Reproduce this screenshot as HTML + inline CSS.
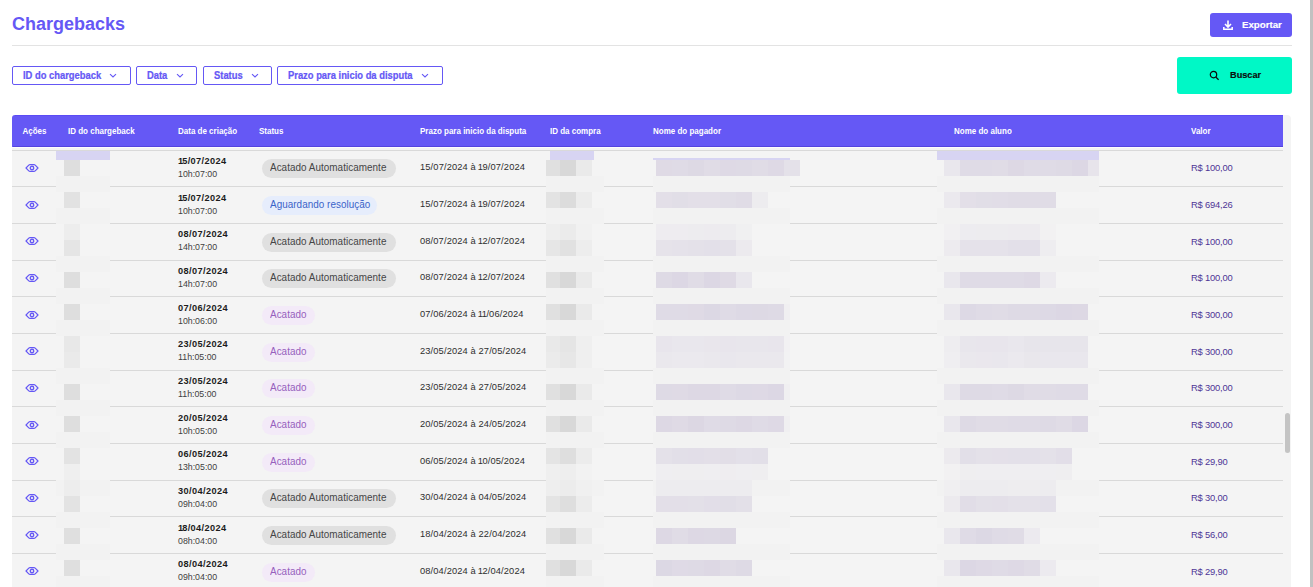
<!DOCTYPE html><html><head><meta charset="utf-8"><style>
*{margin:0;padding:0;box-sizing:border-box}
html,body{width:1313px;height:587px;overflow:hidden;background:#fff;font-family:"Liberation Sans",sans-serif}
.a{position:absolute;white-space:nowrap}
.t{position:absolute;white-space:nowrap;line-height:1}
.fb{position:absolute;top:66px;height:19px;border:1px solid #6558f5;border-radius:2px;background:#fff}
.fb span{position:absolute;top:4px;left:10px;font-size:9.4px;font-weight:700;color:#6558f5;line-height:1;transform:scaleY(1.1);transform-origin:0 100%;-webkit-text-stroke:0.2px #6558f5}
.chev{position:absolute;top:6px;width:8px;height:5px}
.hd{position:absolute;top:128px;font-size:8px;font-weight:700;color:#fff;line-height:1;transform:scaleY(1.2);transform-origin:0 100%}
.line{position:absolute;left:12px;width:1271px;height:1px;background:#d9d9d9}
.eye{position:absolute}
.dt{position:absolute;left:178px;font-size:9.2px;font-weight:700;color:#1c1c1c;line-height:1;letter-spacing:0.4px}
.o1{margin-left:-0.9px;margin-right:-0.7px}
.o1f{margin-right:-1.4px}
.o2{margin-left:-0.8px;margin-right:-0.6px}
.tm{position:absolute;left:178px;font-size:8.8px;color:#3f3f3f;line-height:1}
.pill{position:absolute;left:262px;height:19px;border-radius:10px}
.pill span{position:absolute;left:8px;top:3.9px;font-size:9.9px;line-height:1;letter-spacing:0.05px;transform:scaleY(1.04);transform-origin:0 100%}
.pz{position:absolute;left:420px;font-size:9.3px;color:#2e2e2e;line-height:1;letter-spacing:0.13px}
.vl{position:absolute;left:1191px;font-size:9.4px;color:#4e3596;line-height:1;letter-spacing:-0.2px}
.bl{position:absolute}
</style></head><body><div class="t" style="left:12px;top:15px;font-size:18px;font-weight:700;color:#6558f5">Chargebacks</div>
<div class="a" style="left:12px;top:45px;width:1280px;height:1px;background:#e3e3e3"></div>
<div class="a" style="left:1210px;top:13px;width:82px;height:24px;background:#6558f5;border-radius:3px"></div>
<svg class="a" style="left:1222px;top:20px" width="12" height="11" viewBox="0 0 12 11"><path d="M6 0.5V6.5M3 4L6 7L9 4" stroke="#fff" stroke-width="1.6" fill="none"/><path d="M1.8 7V9.2H10.2V7" stroke="#fff" stroke-width="1.5" fill="none"/></svg>
<div class="t" style="left:1242px;top:20px;font-size:9.7px;font-weight:700;color:#fff;transform:scaleY(1);transform-origin:0 100%;-webkit-text-stroke:0.15px #fff">Exportar</div>
<div class="fb" style="left:12px;width:119px"><span>ID do chargeback</span><svg class="chev" style="left:96px" viewBox="0 0 8 5"><path d="M1 1.2L4 4L7 1.2" stroke="#6558f5" stroke-width="1.1" fill="none"/></svg></div>
<div class="fb" style="left:136px;width:61px"><span>Data</span><svg class="chev" style="left:39px" viewBox="0 0 8 5"><path d="M1 1.2L4 4L7 1.2" stroke="#6558f5" stroke-width="1.1" fill="none"/></svg></div>
<div class="fb" style="left:203px;width:69px"><span>Status</span><svg class="chev" style="left:47px" viewBox="0 0 8 5"><path d="M1 1.2L4 4L7 1.2" stroke="#6558f5" stroke-width="1.1" fill="none"/></svg></div>
<div class="fb" style="left:277px;width:166px"><span>Prazo para inicio da disputa</span><svg class="chev" style="left:143px" viewBox="0 0 8 5"><path d="M1 1.2L4 4L7 1.2" stroke="#6558f5" stroke-width="1.1" fill="none"/></svg></div>
<div class="a" style="left:1177px;top:57px;width:115px;height:37px;background:#00f8c6;border-radius:3px"></div>
<svg class="a" style="left:1209px;top:70px" width="11" height="11" viewBox="0 0 11 11"><circle cx="4.5" cy="4.6" r="3.2" stroke="#0a0a0a" stroke-width="1.2" fill="none"/><path d="M6.9 7.1L9.6 9.8" stroke="#0a0a0a" stroke-width="1.3"/></svg>
<div class="t" style="left:1230px;top:70.5px;font-size:9.2px;font-weight:700;color:#0c0c0c;transform:scaleY(1.08);transform-origin:0 100%;-webkit-text-stroke:0.15px #0c0c0c">Buscar</div>
<div class="a" style="left:12px;top:115px;width:1279px;height:480px;background:#f4f4f4;border-radius:4px 4px 0 0"></div>
<div class="a" style="left:12px;top:115px;width:1271px;height:32px;background:#6558f5;border-radius:3px 0 0 0"></div>
<div class="a" style="left:12px;top:147px;width:1271px;height:1px;background:#fdfdfd"></div>
<div class="a" style="left:13px;top:146px;width:1270px;height:1px;background:#5444de"></div>
<div class="a" style="left:15px;top:115px;width:1268px;height:1px;background:#5b4bf5"></div>
<div class="hd" style="left:22.5px">Ações</div>
<div class="hd" style="left:68px">ID do chargeback</div>
<div class="hd" style="left:178px">Data de criação</div>
<div class="hd" style="left:259px">Status</div>
<div class="hd" style="left:420px">Prazo para inicio da disputa</div>
<div class="hd" style="left:550px">ID da compra</div>
<div class="hd" style="left:653px">Nome do pagador</div>
<div class="hd" style="left:954px">Nome do aluno</div>
<div class="hd" style="left:1191px">Valor</div>
<div class="line" style="top:150px"></div>
<svg class="eye" style="top:163px;left:25px" width="14" height="10" viewBox="0 0 14 10"><path d="M1 5L3.8 2.1Q4.3 1.6 5 1.6H9Q9.7 1.6 10.2 2.1L13 5L10.2 7.9Q9.7 8.4 9 8.4H5Q4.3 8.4 3.8 7.9Z" stroke="#6558f5" stroke-width="1.2" fill="none" stroke-linejoin="round"/><circle cx="7" cy="5" r="1.75" stroke="#6558f5" stroke-width="1.3" fill="none"/></svg>
<div class="dt" style="top:157px"><span class="o1f">1</span>5/07/2024</div>
<div class="tm" style="top:170px">10h:07:00</div>
<div class="pill" style="top:159px;width:134px;background:#e0e0e0"><span style="color:#454545">Acatado Automaticamente</span></div>
<div class="pz" style="top:163px"><span class="o2f">1</span>5/07/2024 à <span class="o2">1</span>9/07/2024</div>
<div class="vl" style="top:163px">R$ 100,00</div>
<div class="line" style="top:186px"></div>
<svg class="eye" style="top:200px;left:25px" width="14" height="10" viewBox="0 0 14 10"><path d="M1 5L3.8 2.1Q4.3 1.6 5 1.6H9Q9.7 1.6 10.2 2.1L13 5L10.2 7.9Q9.7 8.4 9 8.4H5Q4.3 8.4 3.8 7.9Z" stroke="#6558f5" stroke-width="1.2" fill="none" stroke-linejoin="round"/><circle cx="7" cy="5" r="1.75" stroke="#6558f5" stroke-width="1.3" fill="none"/></svg>
<div class="dt" style="top:194px"><span class="o1f">1</span>5/07/2024</div>
<div class="tm" style="top:207px">10h:07:00</div>
<div class="pill" style="top:196px;width:115px;background:#e6edfc"><span style="color:#3a63c9">Aguardando resolução</span></div>
<div class="pz" style="top:200px"><span class="o2f">1</span>5/07/2024 à <span class="o2">1</span>9/07/2024</div>
<div class="vl" style="top:200px">R$ 694,26</div>
<div class="line" style="top:223px"></div>
<svg class="eye" style="top:236px;left:25px" width="14" height="10" viewBox="0 0 14 10"><path d="M1 5L3.8 2.1Q4.3 1.6 5 1.6H9Q9.7 1.6 10.2 2.1L13 5L10.2 7.9Q9.7 8.4 9 8.4H5Q4.3 8.4 3.8 7.9Z" stroke="#6558f5" stroke-width="1.2" fill="none" stroke-linejoin="round"/><circle cx="7" cy="5" r="1.75" stroke="#6558f5" stroke-width="1.3" fill="none"/></svg>
<div class="dt" style="top:230px">08/07/2024</div>
<div class="tm" style="top:243px">14h:07:00</div>
<div class="pill" style="top:233px;width:134px;background:#e0e0e0"><span style="color:#454545">Acatado Automaticamente</span></div>
<div class="pz" style="top:237px">08/07/2024 à <span class="o2">1</span>2/07/2024</div>
<div class="vl" style="top:237px">R$ 100,00</div>
<div class="line" style="top:260px"></div>
<svg class="eye" style="top:273px;left:25px" width="14" height="10" viewBox="0 0 14 10"><path d="M1 5L3.8 2.1Q4.3 1.6 5 1.6H9Q9.7 1.6 10.2 2.1L13 5L10.2 7.9Q9.7 8.4 9 8.4H5Q4.3 8.4 3.8 7.9Z" stroke="#6558f5" stroke-width="1.2" fill="none" stroke-linejoin="round"/><circle cx="7" cy="5" r="1.75" stroke="#6558f5" stroke-width="1.3" fill="none"/></svg>
<div class="dt" style="top:267px">08/07/2024</div>
<div class="tm" style="top:280px">14h:07:00</div>
<div class="pill" style="top:269px;width:134px;background:#e0e0e0"><span style="color:#454545">Acatado Automaticamente</span></div>
<div class="pz" style="top:273px">08/07/2024 à <span class="o2">1</span>2/07/2024</div>
<div class="vl" style="top:273px">R$ 100,00</div>
<div class="line" style="top:296px"></div>
<svg class="eye" style="top:310px;left:25px" width="14" height="10" viewBox="0 0 14 10"><path d="M1 5L3.8 2.1Q4.3 1.6 5 1.6H9Q9.7 1.6 10.2 2.1L13 5L10.2 7.9Q9.7 8.4 9 8.4H5Q4.3 8.4 3.8 7.9Z" stroke="#6558f5" stroke-width="1.2" fill="none" stroke-linejoin="round"/><circle cx="7" cy="5" r="1.75" stroke="#6558f5" stroke-width="1.3" fill="none"/></svg>
<div class="dt" style="top:304px">07/06/2024</div>
<div class="tm" style="top:317px">10h:06:00</div>
<div class="pill" style="top:306px;width:53px;background:#f3eaf8"><span style="color:#9660bd">Acatado</span></div>
<div class="pz" style="top:310px">07/06/2024 à <span class="o2">1</span><span class="o2">1</span>/06/2024</div>
<div class="vl" style="top:310px">R$ 300,00</div>
<div class="line" style="top:333px"></div>
<svg class="eye" style="top:346px;left:25px" width="14" height="10" viewBox="0 0 14 10"><path d="M1 5L3.8 2.1Q4.3 1.6 5 1.6H9Q9.7 1.6 10.2 2.1L13 5L10.2 7.9Q9.7 8.4 9 8.4H5Q4.3 8.4 3.8 7.9Z" stroke="#6558f5" stroke-width="1.2" fill="none" stroke-linejoin="round"/><circle cx="7" cy="5" r="1.75" stroke="#6558f5" stroke-width="1.3" fill="none"/></svg>
<div class="dt" style="top:340px">23/05/2024</div>
<div class="tm" style="top:353px">11h:05:00</div>
<div class="pill" style="top:343px;width:53px;background:#f3eaf8"><span style="color:#9660bd">Acatado</span></div>
<div class="pz" style="top:347px">23/05/2024 à 27/05/2024</div>
<div class="vl" style="top:347px">R$ 300,00</div>
<div class="line" style="top:370px"></div>
<svg class="eye" style="top:383px;left:25px" width="14" height="10" viewBox="0 0 14 10"><path d="M1 5L3.8 2.1Q4.3 1.6 5 1.6H9Q9.7 1.6 10.2 2.1L13 5L10.2 7.9Q9.7 8.4 9 8.4H5Q4.3 8.4 3.8 7.9Z" stroke="#6558f5" stroke-width="1.2" fill="none" stroke-linejoin="round"/><circle cx="7" cy="5" r="1.75" stroke="#6558f5" stroke-width="1.3" fill="none"/></svg>
<div class="dt" style="top:377px">23/05/2024</div>
<div class="tm" style="top:390px">11h:05:00</div>
<div class="pill" style="top:379px;width:53px;background:#f3eaf8"><span style="color:#9660bd">Acatado</span></div>
<div class="pz" style="top:383px">23/05/2024 à 27/05/2024</div>
<div class="vl" style="top:383px">R$ 300,00</div>
<div class="line" style="top:406px"></div>
<svg class="eye" style="top:420px;left:25px" width="14" height="10" viewBox="0 0 14 10"><path d="M1 5L3.8 2.1Q4.3 1.6 5 1.6H9Q9.7 1.6 10.2 2.1L13 5L10.2 7.9Q9.7 8.4 9 8.4H5Q4.3 8.4 3.8 7.9Z" stroke="#6558f5" stroke-width="1.2" fill="none" stroke-linejoin="round"/><circle cx="7" cy="5" r="1.75" stroke="#6558f5" stroke-width="1.3" fill="none"/></svg>
<div class="dt" style="top:414px">20/05/2024</div>
<div class="tm" style="top:427px">10h:05:00</div>
<div class="pill" style="top:416px;width:53px;background:#f3eaf8"><span style="color:#9660bd">Acatado</span></div>
<div class="pz" style="top:420px">20/05/2024 à 24/05/2024</div>
<div class="vl" style="top:420px">R$ 300,00</div>
<div class="line" style="top:443px"></div>
<svg class="eye" style="top:456px;left:25px" width="14" height="10" viewBox="0 0 14 10"><path d="M1 5L3.8 2.1Q4.3 1.6 5 1.6H9Q9.7 1.6 10.2 2.1L13 5L10.2 7.9Q9.7 8.4 9 8.4H5Q4.3 8.4 3.8 7.9Z" stroke="#6558f5" stroke-width="1.2" fill="none" stroke-linejoin="round"/><circle cx="7" cy="5" r="1.75" stroke="#6558f5" stroke-width="1.3" fill="none"/></svg>
<div class="dt" style="top:450px">06/05/2024</div>
<div class="tm" style="top:463px">13h:05:00</div>
<div class="pill" style="top:453px;width:53px;background:#f3eaf8"><span style="color:#9660bd">Acatado</span></div>
<div class="pz" style="top:457px">06/05/2024 à <span class="o2">1</span>0/05/2024</div>
<div class="vl" style="top:457px">R$ 29,90</div>
<div class="line" style="top:480px"></div>
<svg class="eye" style="top:493px;left:25px" width="14" height="10" viewBox="0 0 14 10"><path d="M1 5L3.8 2.1Q4.3 1.6 5 1.6H9Q9.7 1.6 10.2 2.1L13 5L10.2 7.9Q9.7 8.4 9 8.4H5Q4.3 8.4 3.8 7.9Z" stroke="#6558f5" stroke-width="1.2" fill="none" stroke-linejoin="round"/><circle cx="7" cy="5" r="1.75" stroke="#6558f5" stroke-width="1.3" fill="none"/></svg>
<div class="dt" style="top:487px">30/04/2024</div>
<div class="tm" style="top:500px">09h:04:00</div>
<div class="pill" style="top:489px;width:134px;background:#e0e0e0"><span style="color:#454545">Acatado Automaticamente</span></div>
<div class="pz" style="top:493px">30/04/2024 à 04/05/2024</div>
<div class="vl" style="top:493px">R$ 30,00</div>
<div class="line" style="top:516px"></div>
<svg class="eye" style="top:530px;left:25px" width="14" height="10" viewBox="0 0 14 10"><path d="M1 5L3.8 2.1Q4.3 1.6 5 1.6H9Q9.7 1.6 10.2 2.1L13 5L10.2 7.9Q9.7 8.4 9 8.4H5Q4.3 8.4 3.8 7.9Z" stroke="#6558f5" stroke-width="1.2" fill="none" stroke-linejoin="round"/><circle cx="7" cy="5" r="1.75" stroke="#6558f5" stroke-width="1.3" fill="none"/></svg>
<div class="dt" style="top:524px"><span class="o1f">1</span>8/04/2024</div>
<div class="tm" style="top:537px">08h:04:00</div>
<div class="pill" style="top:526px;width:134px;background:#e0e0e0"><span style="color:#454545">Acatado Automaticamente</span></div>
<div class="pz" style="top:530px"><span class="o2f">1</span>8/04/2024 à 22/04/2024</div>
<div class="vl" style="top:530px">R$ 56,00</div>
<div class="line" style="top:553px"></div>
<svg class="eye" style="top:566px;left:25px" width="14" height="10" viewBox="0 0 14 10"><path d="M1 5L3.8 2.1Q4.3 1.6 5 1.6H9Q9.7 1.6 10.2 2.1L13 5L10.2 7.9Q9.7 8.4 9 8.4H5Q4.3 8.4 3.8 7.9Z" stroke="#6558f5" stroke-width="1.2" fill="none" stroke-linejoin="round"/><circle cx="7" cy="5" r="1.75" stroke="#6558f5" stroke-width="1.3" fill="none"/></svg>
<div class="dt" style="top:560px">08/04/2024</div>
<div class="tm" style="top:573px">09h:04:00</div>
<div class="pill" style="top:563px;width:53px;background:#f3eaf8"><span style="color:#9660bd">Acatado</span></div>
<div class="pz" style="top:567px">08/04/2024 à <span class="o2">1</span>2/04/2024</div>
<div class="vl" style="top:567px">R$ 29,90</div>
<div class="a" style="left:1285px;top:413px;width:5px;height:40px;background:#c4c4c4;border-radius:3px"></div>
<div class="a" style="left:1310px;top:0;width:3px;height:587px;background:#c1c1c1"></div><div class="bl" style="left:56px;top:151px;width:54px;height:440px;background:#f4f4f4"></div>
<div class="bl" style="left:56px;top:151px;width:54px;height:9px;background:#d7d4f2"></div>
<div class="bl" style="left:64px;top:160px;width:16px;height:16px;background:rgb(222,222,222)"></div>
<div class="bl" style="left:56px;top:176px;width:54px;height:16px;background:rgb(242,242,242)"></div>
<div class="bl" style="left:64px;top:192px;width:16px;height:16px;background:rgb(226,226,226)"></div>
<div class="bl" style="left:56px;top:208px;width:54px;height:16px;background:rgb(242,242,242)"></div>
<div class="bl" style="left:64px;top:224px;width:16px;height:16px;background:rgb(237,237,237)"></div>
<div class="bl" style="left:64px;top:240px;width:16px;height:16px;background:rgb(229,229,229)"></div>
<div class="bl" style="left:56px;top:256px;width:54px;height:16px;background:rgb(242,242,242)"></div>
<div class="bl" style="left:64px;top:272px;width:16px;height:16px;background:rgb(222,222,222)"></div>
<div class="bl" style="left:56px;top:288px;width:54px;height:16px;background:rgb(242,242,242)"></div>
<div class="bl" style="left:64px;top:304px;width:16px;height:16px;background:rgb(222,222,222)"></div>
<div class="bl" style="left:56px;top:320px;width:54px;height:16px;background:rgb(242,242,242)"></div>
<div class="bl" style="left:64px;top:336px;width:16px;height:16px;background:rgb(232,232,232)"></div>
<div class="bl" style="left:64px;top:352px;width:16px;height:16px;background:rgb(234,234,234)"></div>
<div class="bl" style="left:56px;top:368px;width:54px;height:16px;background:rgb(242,242,242)"></div>
<div class="bl" style="left:64px;top:384px;width:16px;height:16px;background:rgb(222,222,222)"></div>
<div class="bl" style="left:56px;top:400px;width:54px;height:16px;background:rgb(242,242,242)"></div>
<div class="bl" style="left:64px;top:416px;width:16px;height:16px;background:rgb(222,222,222)"></div>
<div class="bl" style="left:56px;top:432px;width:54px;height:16px;background:rgb(242,242,242)"></div>
<div class="bl" style="left:64px;top:448px;width:16px;height:16px;background:rgb(227,227,227)"></div>
<div class="bl" style="left:64px;top:464px;width:16px;height:16px;background:rgb(239,239,239)"></div>
<div class="bl" style="left:56px;top:480px;width:54px;height:16px;background:rgb(242,242,242)"></div>
<div class="bl" style="left:64px;top:480px;width:16px;height:16px;background:rgb(237,237,237)"></div>
<div class="bl" style="left:64px;top:496px;width:16px;height:16px;background:rgb(227,227,227)"></div>
<div class="bl" style="left:56px;top:512px;width:54px;height:16px;background:rgb(242,242,242)"></div>
<div class="bl" style="left:64px;top:528px;width:16px;height:16px;background:rgb(223,223,223)"></div>
<div class="bl" style="left:56px;top:544px;width:54px;height:16px;background:rgb(242,242,242)"></div>
<div class="bl" style="left:64px;top:560px;width:16px;height:16px;background:rgb(223,223,223)"></div>
<div class="bl" style="left:56px;top:576px;width:54px;height:16px;background:rgb(242,242,242)"></div>
<div class="bl" style="left:546px;top:151px;width:58px;height:440px;background:#f4f4f4"></div>
<div class="bl" style="left:550px;top:151px;width:44px;height:9px;background:#d7d4f2"></div>
<div class="bl" style="left:546px;top:160px;width:14px;height:16px;background:rgb(224,224,224)"></div>
<div class="bl" style="left:560px;top:160px;width:16px;height:16px;background:rgb(216,216,216)"></div>
<div class="bl" style="left:576px;top:160px;width:16px;height:16px;background:rgb(234,234,234)"></div>
<div class="bl" style="left:546px;top:176px;width:58px;height:16px;background:rgb(242,242,242)"></div>
<div class="bl" style="left:546px;top:192px;width:14px;height:16px;background:rgb(227,227,227)"></div>
<div class="bl" style="left:560px;top:192px;width:16px;height:16px;background:rgb(220,220,220)"></div>
<div class="bl" style="left:576px;top:192px;width:16px;height:16px;background:rgb(236,236,236)"></div>
<div class="bl" style="left:546px;top:208px;width:58px;height:16px;background:rgb(242,242,242)"></div>
<div class="bl" style="left:546px;top:224px;width:14px;height:16px;background:rgb(238,238,238)"></div>
<div class="bl" style="left:560px;top:224px;width:16px;height:16px;background:rgb(235,235,235)"></div>
<div class="bl" style="left:576px;top:224px;width:16px;height:16px;background:rgb(241,241,241)"></div>
<div class="bl" style="left:546px;top:240px;width:14px;height:16px;background:rgb(230,230,230)"></div>
<div class="bl" style="left:560px;top:240px;width:16px;height:16px;background:rgb(225,225,225)"></div>
<div class="bl" style="left:576px;top:240px;width:16px;height:16px;background:rgb(237,237,237)"></div>
<div class="bl" style="left:546px;top:256px;width:58px;height:16px;background:rgb(242,242,242)"></div>
<div class="bl" style="left:546px;top:272px;width:14px;height:16px;background:rgb(224,224,224)"></div>
<div class="bl" style="left:560px;top:272px;width:16px;height:16px;background:rgb(216,216,216)"></div>
<div class="bl" style="left:576px;top:272px;width:16px;height:16px;background:rgb(234,234,234)"></div>
<div class="bl" style="left:546px;top:288px;width:58px;height:16px;background:rgb(242,242,242)"></div>
<div class="bl" style="left:546px;top:304px;width:14px;height:16px;background:rgb(224,224,224)"></div>
<div class="bl" style="left:560px;top:304px;width:16px;height:16px;background:rgb(216,216,216)"></div>
<div class="bl" style="left:576px;top:304px;width:16px;height:16px;background:rgb(234,234,234)"></div>
<div class="bl" style="left:546px;top:320px;width:58px;height:16px;background:rgb(242,242,242)"></div>
<div class="bl" style="left:546px;top:336px;width:14px;height:16px;background:rgb(233,233,233)"></div>
<div class="bl" style="left:560px;top:336px;width:16px;height:16px;background:rgb(229,229,229)"></div>
<div class="bl" style="left:576px;top:336px;width:16px;height:16px;background:rgb(239,239,239)"></div>
<div class="bl" style="left:546px;top:352px;width:14px;height:16px;background:rgb(235,235,235)"></div>
<div class="bl" style="left:560px;top:352px;width:16px;height:16px;background:rgb(231,231,231)"></div>
<div class="bl" style="left:576px;top:352px;width:16px;height:16px;background:rgb(239,239,239)"></div>
<div class="bl" style="left:546px;top:368px;width:58px;height:16px;background:rgb(242,242,242)"></div>
<div class="bl" style="left:546px;top:384px;width:14px;height:16px;background:rgb(224,224,224)"></div>
<div class="bl" style="left:560px;top:384px;width:16px;height:16px;background:rgb(216,216,216)"></div>
<div class="bl" style="left:576px;top:384px;width:16px;height:16px;background:rgb(234,234,234)"></div>
<div class="bl" style="left:546px;top:400px;width:58px;height:16px;background:rgb(242,242,242)"></div>
<div class="bl" style="left:546px;top:416px;width:14px;height:16px;background:rgb(224,224,224)"></div>
<div class="bl" style="left:560px;top:416px;width:16px;height:16px;background:rgb(216,216,216)"></div>
<div class="bl" style="left:576px;top:416px;width:16px;height:16px;background:rgb(234,234,234)"></div>
<div class="bl" style="left:546px;top:432px;width:58px;height:16px;background:rgb(242,242,242)"></div>
<div class="bl" style="left:546px;top:448px;width:14px;height:16px;background:rgb(228,228,228)"></div>
<div class="bl" style="left:560px;top:448px;width:16px;height:16px;background:rgb(222,222,222)"></div>
<div class="bl" style="left:576px;top:448px;width:16px;height:16px;background:rgb(236,236,236)"></div>
<div class="bl" style="left:546px;top:464px;width:14px;height:16px;background:rgb(239,239,239)"></div>
<div class="bl" style="left:560px;top:464px;width:16px;height:16px;background:rgb(238,238,238)"></div>
<div class="bl" style="left:576px;top:464px;width:16px;height:16px;background:rgb(242,242,242)"></div>
<div class="bl" style="left:546px;top:480px;width:58px;height:16px;background:rgb(242,242,242)"></div>
<div class="bl" style="left:546px;top:480px;width:14px;height:16px;background:rgb(238,238,238)"></div>
<div class="bl" style="left:560px;top:480px;width:16px;height:16px;background:rgb(236,236,236)"></div>
<div class="bl" style="left:576px;top:480px;width:16px;height:16px;background:rgb(240,240,240)"></div>
<div class="bl" style="left:546px;top:496px;width:14px;height:16px;background:rgb(228,228,228)"></div>
<div class="bl" style="left:560px;top:496px;width:16px;height:16px;background:rgb(222,222,222)"></div>
<div class="bl" style="left:576px;top:496px;width:16px;height:16px;background:rgb(236,236,236)"></div>
<div class="bl" style="left:546px;top:512px;width:58px;height:16px;background:rgb(242,242,242)"></div>
<div class="bl" style="left:546px;top:528px;width:14px;height:16px;background:rgb(224,224,224)"></div>
<div class="bl" style="left:560px;top:528px;width:16px;height:16px;background:rgb(216,216,216)"></div>
<div class="bl" style="left:576px;top:528px;width:16px;height:16px;background:rgb(234,234,234)"></div>
<div class="bl" style="left:546px;top:544px;width:58px;height:16px;background:rgb(242,242,242)"></div>
<div class="bl" style="left:546px;top:560px;width:14px;height:16px;background:rgb(224,224,224)"></div>
<div class="bl" style="left:560px;top:560px;width:16px;height:16px;background:rgb(216,216,216)"></div>
<div class="bl" style="left:576px;top:560px;width:16px;height:16px;background:rgb(234,234,234)"></div>
<div class="bl" style="left:546px;top:576px;width:58px;height:16px;background:rgb(242,242,242)"></div>
<div class="bl" style="left:653px;top:151px;width:137px;height:440px;background:#f4f4f4"></div>
<div class="bl" style="left:653px;top:158px;width:137px;height:2px;background:#d7d4f2"></div>
<div class="bl" style="left:656px;top:160px;width:16px;height:16px;background:rgb(223,218,229)"></div>
<div class="bl" style="left:672px;top:160px;width:16px;height:16px;background:rgb(223,219,230)"></div>
<div class="bl" style="left:688px;top:160px;width:16px;height:16px;background:rgb(221,217,228)"></div>
<div class="bl" style="left:704px;top:160px;width:16px;height:16px;background:rgb(224,220,230)"></div>
<div class="bl" style="left:720px;top:160px;width:16px;height:16px;background:rgb(222,217,229)"></div>
<div class="bl" style="left:736px;top:160px;width:16px;height:16px;background:rgb(222,218,229)"></div>
<div class="bl" style="left:752px;top:160px;width:16px;height:16px;background:rgb(224,220,230)"></div>
<div class="bl" style="left:768px;top:160px;width:16px;height:16px;background:rgb(222,217,229)"></div>
<div class="bl" style="left:784px;top:160px;width:16px;height:16px;background:rgb(228,225,233)"></div>
<div class="bl" style="left:653px;top:176px;width:137px;height:16px;background:rgb(242,242,242)"></div>
<div class="bl" style="left:656px;top:192px;width:16px;height:16px;background:rgb(227,223,232)"></div>
<div class="bl" style="left:672px;top:192px;width:16px;height:16px;background:rgb(225,222,231)"></div>
<div class="bl" style="left:688px;top:192px;width:16px;height:16px;background:rgb(227,223,232)"></div>
<div class="bl" style="left:704px;top:192px;width:16px;height:16px;background:rgb(227,223,232)"></div>
<div class="bl" style="left:720px;top:192px;width:16px;height:16px;background:rgb(225,222,231)"></div>
<div class="bl" style="left:736px;top:192px;width:16px;height:16px;background:rgb(224,220,230)"></div>
<div class="bl" style="left:752px;top:192px;width:16px;height:16px;background:rgb(237,236,239)"></div>
<div class="bl" style="left:653px;top:208px;width:137px;height:16px;background:rgb(242,242,242)"></div>
<div class="bl" style="left:656px;top:224px;width:16px;height:16px;background:rgb(238,236,240)"></div>
<div class="bl" style="left:672px;top:224px;width:16px;height:16px;background:rgb(238,236,240)"></div>
<div class="bl" style="left:688px;top:224px;width:16px;height:16px;background:rgb(237,236,239)"></div>
<div class="bl" style="left:704px;top:224px;width:16px;height:16px;background:rgb(237,235,239)"></div>
<div class="bl" style="left:720px;top:224px;width:16px;height:16px;background:rgb(237,236,239)"></div>
<div class="bl" style="left:736px;top:224px;width:16px;height:16px;background:rgb(240,240,241)"></div>
<div class="bl" style="left:656px;top:240px;width:16px;height:16px;background:rgb(230,227,234)"></div>
<div class="bl" style="left:672px;top:240px;width:16px;height:16px;background:rgb(229,226,234)"></div>
<div class="bl" style="left:688px;top:240px;width:16px;height:16px;background:rgb(228,225,233)"></div>
<div class="bl" style="left:704px;top:240px;width:16px;height:16px;background:rgb(227,224,233)"></div>
<div class="bl" style="left:720px;top:240px;width:16px;height:16px;background:rgb(228,225,233)"></div>
<div class="bl" style="left:736px;top:240px;width:16px;height:16px;background:rgb(236,234,238)"></div>
<div class="bl" style="left:653px;top:256px;width:137px;height:16px;background:rgb(242,242,242)"></div>
<div class="bl" style="left:656px;top:272px;width:16px;height:16px;background:rgb(222,218,229)"></div>
<div class="bl" style="left:672px;top:272px;width:16px;height:16px;background:rgb(220,215,228)"></div>
<div class="bl" style="left:688px;top:272px;width:16px;height:16px;background:rgb(224,220,230)"></div>
<div class="bl" style="left:704px;top:272px;width:16px;height:16px;background:rgb(220,215,228)"></div>
<div class="bl" style="left:720px;top:272px;width:16px;height:16px;background:rgb(223,218,229)"></div>
<div class="bl" style="left:736px;top:272px;width:16px;height:16px;background:rgb(233,231,237)"></div>
<div class="bl" style="left:653px;top:288px;width:137px;height:16px;background:rgb(242,242,242)"></div>
<div class="bl" style="left:656px;top:304px;width:16px;height:16px;background:rgb(223,219,230)"></div>
<div class="bl" style="left:672px;top:304px;width:16px;height:16px;background:rgb(223,219,230)"></div>
<div class="bl" style="left:688px;top:304px;width:16px;height:16px;background:rgb(223,218,229)"></div>
<div class="bl" style="left:704px;top:304px;width:16px;height:16px;background:rgb(220,216,228)"></div>
<div class="bl" style="left:720px;top:304px;width:16px;height:16px;background:rgb(223,219,230)"></div>
<div class="bl" style="left:736px;top:304px;width:16px;height:16px;background:rgb(221,217,229)"></div>
<div class="bl" style="left:752px;top:304px;width:16px;height:16px;background:rgb(221,217,228)"></div>
<div class="bl" style="left:768px;top:304px;width:16px;height:16px;background:rgb(222,218,229)"></div>
<div class="bl" style="left:784px;top:304px;width:6px;height:16px;background:rgb(240,239,241)"></div>
<div class="bl" style="left:653px;top:320px;width:137px;height:16px;background:rgb(242,242,242)"></div>
<div class="bl" style="left:656px;top:336px;width:16px;height:16px;background:rgb(232,229,236)"></div>
<div class="bl" style="left:672px;top:336px;width:16px;height:16px;background:rgb(233,231,237)"></div>
<div class="bl" style="left:688px;top:336px;width:16px;height:16px;background:rgb(233,231,237)"></div>
<div class="bl" style="left:704px;top:336px;width:16px;height:16px;background:rgb(233,230,236)"></div>
<div class="bl" style="left:720px;top:336px;width:16px;height:16px;background:rgb(232,229,236)"></div>
<div class="bl" style="left:736px;top:336px;width:16px;height:16px;background:rgb(232,230,236)"></div>
<div class="bl" style="left:752px;top:336px;width:16px;height:16px;background:rgb(232,230,236)"></div>
<div class="bl" style="left:768px;top:336px;width:16px;height:16px;background:rgb(232,229,236)"></div>
<div class="bl" style="left:784px;top:336px;width:6px;height:16px;background:rgb(242,241,243)"></div>
<div class="bl" style="left:656px;top:352px;width:16px;height:16px;background:rgb(234,232,237)"></div>
<div class="bl" style="left:672px;top:352px;width:16px;height:16px;background:rgb(235,233,238)"></div>
<div class="bl" style="left:688px;top:352px;width:16px;height:16px;background:rgb(235,233,238)"></div>
<div class="bl" style="left:704px;top:352px;width:16px;height:16px;background:rgb(234,232,237)"></div>
<div class="bl" style="left:720px;top:352px;width:16px;height:16px;background:rgb(233,231,237)"></div>
<div class="bl" style="left:736px;top:352px;width:16px;height:16px;background:rgb(234,232,237)"></div>
<div class="bl" style="left:752px;top:352px;width:16px;height:16px;background:rgb(234,232,237)"></div>
<div class="bl" style="left:768px;top:352px;width:16px;height:16px;background:rgb(234,232,237)"></div>
<div class="bl" style="left:784px;top:352px;width:6px;height:16px;background:rgb(242,242,243)"></div>
<div class="bl" style="left:653px;top:368px;width:137px;height:16px;background:rgb(242,242,242)"></div>
<div class="bl" style="left:656px;top:384px;width:16px;height:16px;background:rgb(222,218,229)"></div>
<div class="bl" style="left:672px;top:384px;width:16px;height:16px;background:rgb(223,218,229)"></div>
<div class="bl" style="left:688px;top:384px;width:16px;height:16px;background:rgb(221,216,228)"></div>
<div class="bl" style="left:704px;top:384px;width:16px;height:16px;background:rgb(221,216,228)"></div>
<div class="bl" style="left:720px;top:384px;width:16px;height:16px;background:rgb(223,219,230)"></div>
<div class="bl" style="left:736px;top:384px;width:16px;height:16px;background:rgb(221,217,229)"></div>
<div class="bl" style="left:752px;top:384px;width:16px;height:16px;background:rgb(222,217,229)"></div>
<div class="bl" style="left:768px;top:384px;width:16px;height:16px;background:rgb(220,215,228)"></div>
<div class="bl" style="left:784px;top:384px;width:6px;height:16px;background:rgb(240,239,241)"></div>
<div class="bl" style="left:653px;top:400px;width:137px;height:16px;background:rgb(242,242,242)"></div>
<div class="bl" style="left:656px;top:416px;width:16px;height:16px;background:rgb(221,216,228)"></div>
<div class="bl" style="left:672px;top:416px;width:16px;height:16px;background:rgb(223,218,229)"></div>
<div class="bl" style="left:688px;top:416px;width:16px;height:16px;background:rgb(220,215,227)"></div>
<div class="bl" style="left:704px;top:416px;width:16px;height:16px;background:rgb(223,219,230)"></div>
<div class="bl" style="left:720px;top:416px;width:16px;height:16px;background:rgb(222,218,229)"></div>
<div class="bl" style="left:736px;top:416px;width:16px;height:16px;background:rgb(221,216,228)"></div>
<div class="bl" style="left:752px;top:416px;width:16px;height:16px;background:rgb(223,219,230)"></div>
<div class="bl" style="left:768px;top:416px;width:16px;height:16px;background:rgb(222,217,229)"></div>
<div class="bl" style="left:784px;top:416px;width:6px;height:16px;background:rgb(240,239,241)"></div>
<div class="bl" style="left:653px;top:432px;width:137px;height:16px;background:rgb(242,242,242)"></div>
<div class="bl" style="left:656px;top:448px;width:16px;height:16px;background:rgb(228,225,233)"></div>
<div class="bl" style="left:672px;top:448px;width:16px;height:16px;background:rgb(226,223,232)"></div>
<div class="bl" style="left:688px;top:448px;width:16px;height:16px;background:rgb(226,222,232)"></div>
<div class="bl" style="left:704px;top:448px;width:16px;height:16px;background:rgb(227,223,232)"></div>
<div class="bl" style="left:720px;top:448px;width:16px;height:16px;background:rgb(226,222,231)"></div>
<div class="bl" style="left:736px;top:448px;width:16px;height:16px;background:rgb(227,224,233)"></div>
<div class="bl" style="left:752px;top:448px;width:16px;height:16px;background:rgb(226,223,232)"></div>
<div class="bl" style="left:656px;top:464px;width:16px;height:16px;background:rgb(239,238,241)"></div>
<div class="bl" style="left:672px;top:464px;width:16px;height:16px;background:rgb(239,238,240)"></div>
<div class="bl" style="left:688px;top:464px;width:16px;height:16px;background:rgb(239,238,240)"></div>
<div class="bl" style="left:704px;top:464px;width:16px;height:16px;background:rgb(239,238,241)"></div>
<div class="bl" style="left:720px;top:464px;width:16px;height:16px;background:rgb(239,237,240)"></div>
<div class="bl" style="left:736px;top:464px;width:16px;height:16px;background:rgb(239,238,241)"></div>
<div class="bl" style="left:752px;top:464px;width:16px;height:16px;background:rgb(239,238,240)"></div>
<div class="bl" style="left:653px;top:480px;width:137px;height:16px;background:rgb(242,242,242)"></div>
<div class="bl" style="left:656px;top:480px;width:16px;height:16px;background:rgb(237,236,239)"></div>
<div class="bl" style="left:672px;top:480px;width:16px;height:16px;background:rgb(237,236,239)"></div>
<div class="bl" style="left:688px;top:480px;width:16px;height:16px;background:rgb(237,236,239)"></div>
<div class="bl" style="left:704px;top:480px;width:16px;height:16px;background:rgb(237,236,239)"></div>
<div class="bl" style="left:720px;top:480px;width:16px;height:16px;background:rgb(237,236,239)"></div>
<div class="bl" style="left:736px;top:480px;width:16px;height:16px;background:rgb(237,236,239)"></div>
<div class="bl" style="left:656px;top:496px;width:16px;height:16px;background:rgb(227,223,232)"></div>
<div class="bl" style="left:672px;top:496px;width:16px;height:16px;background:rgb(227,223,232)"></div>
<div class="bl" style="left:688px;top:496px;width:16px;height:16px;background:rgb(227,224,232)"></div>
<div class="bl" style="left:704px;top:496px;width:16px;height:16px;background:rgb(226,222,232)"></div>
<div class="bl" style="left:720px;top:496px;width:16px;height:16px;background:rgb(225,222,231)"></div>
<div class="bl" style="left:736px;top:496px;width:16px;height:16px;background:rgb(227,224,232)"></div>
<div class="bl" style="left:653px;top:512px;width:137px;height:16px;background:rgb(242,242,242)"></div>
<div class="bl" style="left:656px;top:528px;width:16px;height:16px;background:rgb(221,216,228)"></div>
<div class="bl" style="left:672px;top:528px;width:16px;height:16px;background:rgb(224,220,230)"></div>
<div class="bl" style="left:688px;top:528px;width:16px;height:16px;background:rgb(221,216,228)"></div>
<div class="bl" style="left:704px;top:528px;width:16px;height:16px;background:rgb(221,217,228)"></div>
<div class="bl" style="left:720px;top:528px;width:16px;height:16px;background:rgb(220,215,227)"></div>
<div class="bl" style="left:653px;top:544px;width:137px;height:16px;background:rgb(242,242,242)"></div>
<div class="bl" style="left:656px;top:560px;width:16px;height:16px;background:rgb(220,216,228)"></div>
<div class="bl" style="left:672px;top:560px;width:16px;height:16px;background:rgb(223,218,230)"></div>
<div class="bl" style="left:688px;top:560px;width:16px;height:16px;background:rgb(222,218,229)"></div>
<div class="bl" style="left:704px;top:560px;width:16px;height:16px;background:rgb(221,216,228)"></div>
<div class="bl" style="left:720px;top:560px;width:16px;height:16px;background:rgb(224,220,230)"></div>
<div class="bl" style="left:736px;top:560px;width:16px;height:16px;background:rgb(222,218,229)"></div>
<div class="bl" style="left:653px;top:576px;width:137px;height:16px;background:rgb(242,242,242)"></div>
<div class="bl" style="left:937px;top:151px;width:162px;height:440px;background:#f4f4f4"></div>
<div class="bl" style="left:937px;top:151px;width:162px;height:9px;background:#d7d4f2"></div>
<div class="bl" style="left:944px;top:160px;width:16px;height:16px;background:rgb(233,231,237)"></div>
<div class="bl" style="left:960px;top:160px;width:16px;height:16px;background:rgb(223,219,230)"></div>
<div class="bl" style="left:976px;top:160px;width:16px;height:16px;background:rgb(223,219,230)"></div>
<div class="bl" style="left:992px;top:160px;width:16px;height:16px;background:rgb(224,220,230)"></div>
<div class="bl" style="left:1008px;top:160px;width:16px;height:16px;background:rgb(221,216,228)"></div>
<div class="bl" style="left:1024px;top:160px;width:16px;height:16px;background:rgb(223,219,230)"></div>
<div class="bl" style="left:1040px;top:160px;width:16px;height:16px;background:rgb(223,219,230)"></div>
<div class="bl" style="left:1056px;top:160px;width:16px;height:16px;background:rgb(222,218,229)"></div>
<div class="bl" style="left:1072px;top:160px;width:16px;height:16px;background:rgb(220,215,228)"></div>
<div class="bl" style="left:1088px;top:160px;width:11px;height:16px;background:rgb(231,228,235)"></div>
<div class="bl" style="left:937px;top:176px;width:162px;height:16px;background:rgb(242,242,242)"></div>
<div class="bl" style="left:944px;top:192px;width:16px;height:16px;background:rgb(235,233,238)"></div>
<div class="bl" style="left:960px;top:192px;width:16px;height:16px;background:rgb(227,223,232)"></div>
<div class="bl" style="left:976px;top:192px;width:16px;height:16px;background:rgb(225,222,231)"></div>
<div class="bl" style="left:992px;top:192px;width:16px;height:16px;background:rgb(225,221,231)"></div>
<div class="bl" style="left:1008px;top:192px;width:16px;height:16px;background:rgb(224,220,230)"></div>
<div class="bl" style="left:1024px;top:192px;width:16px;height:16px;background:rgb(224,220,230)"></div>
<div class="bl" style="left:1040px;top:192px;width:16px;height:16px;background:rgb(224,220,230)"></div>
<div class="bl" style="left:937px;top:208px;width:162px;height:16px;background:rgb(242,242,242)"></div>
<div class="bl" style="left:944px;top:224px;width:16px;height:16px;background:rgb(241,240,242)"></div>
<div class="bl" style="left:960px;top:224px;width:16px;height:16px;background:rgb(237,236,240)"></div>
<div class="bl" style="left:976px;top:224px;width:16px;height:16px;background:rgb(237,236,239)"></div>
<div class="bl" style="left:992px;top:224px;width:16px;height:16px;background:rgb(237,236,239)"></div>
<div class="bl" style="left:1008px;top:224px;width:16px;height:16px;background:rgb(237,235,239)"></div>
<div class="bl" style="left:1024px;top:224px;width:16px;height:16px;background:rgb(237,235,239)"></div>
<div class="bl" style="left:1040px;top:224px;width:16px;height:16px;background:rgb(242,241,242)"></div>
<div class="bl" style="left:944px;top:240px;width:16px;height:16px;background:rgb(237,235,239)"></div>
<div class="bl" style="left:960px;top:240px;width:16px;height:16px;background:rgb(229,226,234)"></div>
<div class="bl" style="left:976px;top:240px;width:16px;height:16px;background:rgb(229,226,234)"></div>
<div class="bl" style="left:992px;top:240px;width:16px;height:16px;background:rgb(229,226,234)"></div>
<div class="bl" style="left:1008px;top:240px;width:16px;height:16px;background:rgb(227,224,233)"></div>
<div class="bl" style="left:1024px;top:240px;width:16px;height:16px;background:rgb(227,224,233)"></div>
<div class="bl" style="left:1040px;top:240px;width:16px;height:16px;background:rgb(238,237,240)"></div>
<div class="bl" style="left:937px;top:256px;width:162px;height:16px;background:rgb(242,242,242)"></div>
<div class="bl" style="left:944px;top:272px;width:16px;height:16px;background:rgb(233,231,237)"></div>
<div class="bl" style="left:960px;top:272px;width:16px;height:16px;background:rgb(223,219,230)"></div>
<div class="bl" style="left:976px;top:272px;width:16px;height:16px;background:rgb(223,219,230)"></div>
<div class="bl" style="left:992px;top:272px;width:16px;height:16px;background:rgb(223,219,230)"></div>
<div class="bl" style="left:1008px;top:272px;width:16px;height:16px;background:rgb(223,219,230)"></div>
<div class="bl" style="left:1024px;top:272px;width:16px;height:16px;background:rgb(222,217,229)"></div>
<div class="bl" style="left:1040px;top:272px;width:16px;height:16px;background:rgb(236,234,239)"></div>
<div class="bl" style="left:937px;top:288px;width:162px;height:16px;background:rgb(242,242,242)"></div>
<div class="bl" style="left:944px;top:304px;width:16px;height:16px;background:rgb(233,231,237)"></div>
<div class="bl" style="left:960px;top:304px;width:16px;height:16px;background:rgb(221,217,229)"></div>
<div class="bl" style="left:976px;top:304px;width:16px;height:16px;background:rgb(223,219,230)"></div>
<div class="bl" style="left:992px;top:304px;width:16px;height:16px;background:rgb(224,220,230)"></div>
<div class="bl" style="left:1008px;top:304px;width:16px;height:16px;background:rgb(222,218,229)"></div>
<div class="bl" style="left:1024px;top:304px;width:16px;height:16px;background:rgb(222,218,229)"></div>
<div class="bl" style="left:1040px;top:304px;width:16px;height:16px;background:rgb(221,217,229)"></div>
<div class="bl" style="left:1056px;top:304px;width:16px;height:16px;background:rgb(220,215,228)"></div>
<div class="bl" style="left:1072px;top:304px;width:16px;height:16px;background:rgb(221,216,228)"></div>
<div class="bl" style="left:937px;top:320px;width:162px;height:16px;background:rgb(242,242,242)"></div>
<div class="bl" style="left:944px;top:336px;width:16px;height:16px;background:rgb(238,237,240)"></div>
<div class="bl" style="left:960px;top:336px;width:16px;height:16px;background:rgb(232,230,236)"></div>
<div class="bl" style="left:976px;top:336px;width:16px;height:16px;background:rgb(232,229,236)"></div>
<div class="bl" style="left:992px;top:336px;width:16px;height:16px;background:rgb(232,229,236)"></div>
<div class="bl" style="left:1008px;top:336px;width:16px;height:16px;background:rgb(233,231,237)"></div>
<div class="bl" style="left:1024px;top:336px;width:16px;height:16px;background:rgb(231,229,235)"></div>
<div class="bl" style="left:1040px;top:336px;width:16px;height:16px;background:rgb(231,229,235)"></div>
<div class="bl" style="left:1056px;top:336px;width:16px;height:16px;background:rgb(231,229,235)"></div>
<div class="bl" style="left:1072px;top:336px;width:16px;height:16px;background:rgb(231,229,235)"></div>
<div class="bl" style="left:944px;top:352px;width:16px;height:16px;background:rgb(239,238,241)"></div>
<div class="bl" style="left:960px;top:352px;width:16px;height:16px;background:rgb(234,232,237)"></div>
<div class="bl" style="left:976px;top:352px;width:16px;height:16px;background:rgb(234,231,237)"></div>
<div class="bl" style="left:992px;top:352px;width:16px;height:16px;background:rgb(233,231,237)"></div>
<div class="bl" style="left:1008px;top:352px;width:16px;height:16px;background:rgb(235,233,238)"></div>
<div class="bl" style="left:1024px;top:352px;width:16px;height:16px;background:rgb(233,231,236)"></div>
<div class="bl" style="left:1040px;top:352px;width:16px;height:16px;background:rgb(233,231,237)"></div>
<div class="bl" style="left:1056px;top:352px;width:16px;height:16px;background:rgb(233,231,237)"></div>
<div class="bl" style="left:1072px;top:352px;width:16px;height:16px;background:rgb(233,231,237)"></div>
<div class="bl" style="left:937px;top:368px;width:162px;height:16px;background:rgb(242,242,242)"></div>
<div class="bl" style="left:944px;top:384px;width:16px;height:16px;background:rgb(233,231,237)"></div>
<div class="bl" style="left:960px;top:384px;width:16px;height:16px;background:rgb(222,218,229)"></div>
<div class="bl" style="left:976px;top:384px;width:16px;height:16px;background:rgb(222,218,229)"></div>
<div class="bl" style="left:992px;top:384px;width:16px;height:16px;background:rgb(223,219,230)"></div>
<div class="bl" style="left:1008px;top:384px;width:16px;height:16px;background:rgb(221,217,228)"></div>
<div class="bl" style="left:1024px;top:384px;width:16px;height:16px;background:rgb(224,220,230)"></div>
<div class="bl" style="left:1040px;top:384px;width:16px;height:16px;background:rgb(224,220,230)"></div>
<div class="bl" style="left:1056px;top:384px;width:16px;height:16px;background:rgb(223,219,230)"></div>
<div class="bl" style="left:1072px;top:384px;width:16px;height:16px;background:rgb(223,219,230)"></div>
<div class="bl" style="left:937px;top:400px;width:162px;height:16px;background:rgb(242,242,242)"></div>
<div class="bl" style="left:944px;top:416px;width:16px;height:16px;background:rgb(233,231,237)"></div>
<div class="bl" style="left:960px;top:416px;width:16px;height:16px;background:rgb(222,218,229)"></div>
<div class="bl" style="left:976px;top:416px;width:16px;height:16px;background:rgb(224,220,230)"></div>
<div class="bl" style="left:992px;top:416px;width:16px;height:16px;background:rgb(224,220,230)"></div>
<div class="bl" style="left:1008px;top:416px;width:16px;height:16px;background:rgb(223,219,230)"></div>
<div class="bl" style="left:1024px;top:416px;width:16px;height:16px;background:rgb(223,219,230)"></div>
<div class="bl" style="left:1040px;top:416px;width:16px;height:16px;background:rgb(222,218,229)"></div>
<div class="bl" style="left:1056px;top:416px;width:16px;height:16px;background:rgb(224,220,230)"></div>
<div class="bl" style="left:1072px;top:416px;width:16px;height:16px;background:rgb(220,215,228)"></div>
<div class="bl" style="left:937px;top:432px;width:162px;height:16px;background:rgb(242,242,242)"></div>
<div class="bl" style="left:944px;top:448px;width:16px;height:16px;background:rgb(236,234,238)"></div>
<div class="bl" style="left:960px;top:448px;width:16px;height:16px;background:rgb(226,223,232)"></div>
<div class="bl" style="left:976px;top:448px;width:16px;height:16px;background:rgb(228,225,233)"></div>
<div class="bl" style="left:992px;top:448px;width:16px;height:16px;background:rgb(228,224,233)"></div>
<div class="bl" style="left:1008px;top:448px;width:16px;height:16px;background:rgb(227,224,233)"></div>
<div class="bl" style="left:1024px;top:448px;width:16px;height:16px;background:rgb(227,224,233)"></div>
<div class="bl" style="left:1040px;top:448px;width:16px;height:16px;background:rgb(228,225,233)"></div>
<div class="bl" style="left:1056px;top:448px;width:16px;height:16px;background:rgb(226,222,232)"></div>
<div class="bl" style="left:944px;top:464px;width:16px;height:16px;background:rgb(242,241,242)"></div>
<div class="bl" style="left:960px;top:464px;width:16px;height:16px;background:rgb(239,238,240)"></div>
<div class="bl" style="left:976px;top:464px;width:16px;height:16px;background:rgb(239,238,241)"></div>
<div class="bl" style="left:992px;top:464px;width:16px;height:16px;background:rgb(239,238,241)"></div>
<div class="bl" style="left:1008px;top:464px;width:16px;height:16px;background:rgb(239,238,241)"></div>
<div class="bl" style="left:1024px;top:464px;width:16px;height:16px;background:rgb(239,238,241)"></div>
<div class="bl" style="left:1040px;top:464px;width:16px;height:16px;background:rgb(239,238,241)"></div>
<div class="bl" style="left:1056px;top:464px;width:16px;height:16px;background:rgb(239,238,240)"></div>
<div class="bl" style="left:937px;top:480px;width:162px;height:16px;background:rgb(242,242,242)"></div>
<div class="bl" style="left:944px;top:480px;width:16px;height:16px;background:rgb(240,239,241)"></div>
<div class="bl" style="left:960px;top:480px;width:16px;height:16px;background:rgb(237,236,239)"></div>
<div class="bl" style="left:976px;top:480px;width:16px;height:16px;background:rgb(237,236,239)"></div>
<div class="bl" style="left:992px;top:480px;width:16px;height:16px;background:rgb(237,236,239)"></div>
<div class="bl" style="left:1008px;top:480px;width:16px;height:16px;background:rgb(238,237,239)"></div>
<div class="bl" style="left:1024px;top:480px;width:16px;height:16px;background:rgb(238,237,239)"></div>
<div class="bl" style="left:1040px;top:480px;width:16px;height:16px;background:rgb(237,236,239)"></div>
<div class="bl" style="left:944px;top:496px;width:16px;height:16px;background:rgb(236,234,238)"></div>
<div class="bl" style="left:960px;top:496px;width:16px;height:16px;background:rgb(225,221,231)"></div>
<div class="bl" style="left:976px;top:496px;width:16px;height:16px;background:rgb(227,224,232)"></div>
<div class="bl" style="left:992px;top:496px;width:16px;height:16px;background:rgb(227,223,232)"></div>
<div class="bl" style="left:1008px;top:496px;width:16px;height:16px;background:rgb(228,225,233)"></div>
<div class="bl" style="left:1024px;top:496px;width:16px;height:16px;background:rgb(228,225,233)"></div>
<div class="bl" style="left:1040px;top:496px;width:16px;height:16px;background:rgb(227,224,233)"></div>
<div class="bl" style="left:937px;top:512px;width:162px;height:16px;background:rgb(242,242,242)"></div>
<div class="bl" style="left:944px;top:528px;width:16px;height:16px;background:rgb(233,231,237)"></div>
<div class="bl" style="left:960px;top:528px;width:16px;height:16px;background:rgb(223,219,230)"></div>
<div class="bl" style="left:976px;top:528px;width:16px;height:16px;background:rgb(220,216,228)"></div>
<div class="bl" style="left:992px;top:528px;width:16px;height:16px;background:rgb(223,219,230)"></div>
<div class="bl" style="left:1008px;top:528px;width:16px;height:16px;background:rgb(224,220,230)"></div>
<div class="bl" style="left:1024px;top:528px;width:16px;height:16px;background:rgb(236,234,239)"></div>
<div class="bl" style="left:937px;top:544px;width:162px;height:16px;background:rgb(242,242,242)"></div>
<div class="bl" style="left:944px;top:560px;width:16px;height:16px;background:rgb(233,231,237)"></div>
<div class="bl" style="left:960px;top:560px;width:16px;height:16px;background:rgb(220,215,228)"></div>
<div class="bl" style="left:976px;top:560px;width:16px;height:16px;background:rgb(222,217,229)"></div>
<div class="bl" style="left:992px;top:560px;width:16px;height:16px;background:rgb(223,219,230)"></div>
<div class="bl" style="left:1008px;top:560px;width:16px;height:16px;background:rgb(222,217,229)"></div>
<div class="bl" style="left:1024px;top:560px;width:16px;height:16px;background:rgb(224,220,230)"></div>
<div class="bl" style="left:1040px;top:560px;width:16px;height:16px;background:rgb(236,234,239)"></div>
<div class="bl" style="left:937px;top:576px;width:162px;height:16px;background:rgb(242,242,242)"></div></body></html>
